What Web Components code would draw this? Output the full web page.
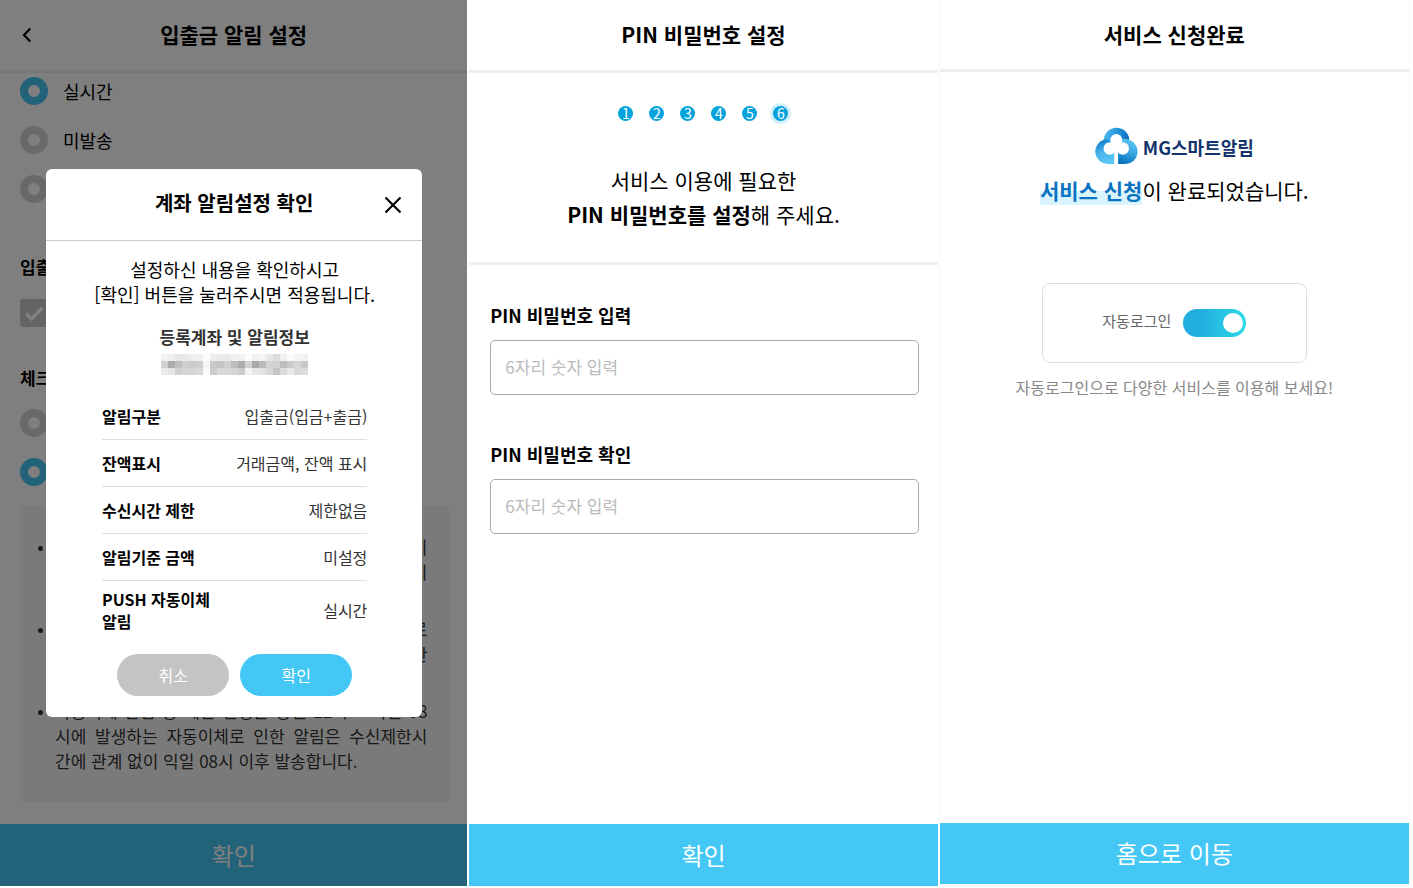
<!DOCTYPE html>
<html lang="ko">
<head>
<meta charset="utf-8">
<meta name="viewport" content="width=device-width, initial-scale=1">
<title>MG스마트알림</title>
<style>
  body {
    margin: 0;
    background: #fff;
    color: #000;
    font-family: "Noto Sans CJK KR", "Noto Sans", sans-serif;
    font-size: 18px;
    line-height: 25px;
    --sky: #45c7f5;
    --line: #eee;
  }
  main {
    display: grid;
    grid-template-columns: 467fr 468fr 469fr;
    align-items: start;
    gap: 2px;
    min-height: 100vh;
    padding-right: 4px;
    box-sizing: border-box;
  }
</style>
</head>
<body>
<main>
  <app-screen heading="입출금 알림 설정" action="확인" back>
    <alarm-settings></alarm-settings>
    <confirm-dialog slot="overlay" heading="계좌 알림설정 확인">
      <alarm-summary></alarm-summary>
    </confirm-dialog>
  </app-screen>

  <app-screen heading="PIN 비밀번호 설정" action="확인">
    <step-intro total="6" current="6">
      서비스 이용에 필요한<br><b>PIN 비밀번호를 설정</b>해 주세요.
    </step-intro>
    <pin-form>
      <pin-field label="PIN 비밀번호 입력" placeholder="6자리 숫자 입력"></pin-field>
      <pin-field label="PIN 비밀번호 확인" placeholder="6자리 숫자 입력"></pin-field>
    </pin-form>
  </app-screen>

  <app-screen heading="서비스 신청완료" action="홈으로 이동" compact>
    <done-panel>
      <auto-login label="자동로그인"></auto-login>
    </done-panel>
  </app-screen>
</main>

<script>
(function () {
  // Attaches an open shadow root filled from a markup string
  function mount(host, html) {
    const template = document.createElement("template");
    template.innerHTML = html;
    host.attachShadow({ mode: "open" }).appendChild(template.content.cloneNode(true));
  }

  class AppScreen extends HTMLElement {
    connectedCallback() {
      const back = this.hasAttribute("back")
        ? `<button class="back" aria-label="이전">
             <svg width="10" height="16" viewBox="0 0 10 16"><path d="M8.2 1.5 2 8l6.2 6.5" fill="none" stroke="#000" stroke-width="2.2"/></svg>
           </button>`
        : "";
      mount(this, `
        <style>
          :host {
            position: relative;
            display: flex;
            flex-direction: column;
            min-width: 0;
            min-height: calc(100vh - 2px);
            background: #fff;
          }
          :host([compact]) {
            min-height: calc(100vh - 4px);
            box-shadow: 0 0 0 1px #f7f7f7;
          }
          header {
            display: grid;
            grid-template-columns: 54px 1fr 54px;
            align-items: center;
            height: 70px;
            border-bottom: 3px solid var(--line);
          }
          :host([compact]) header { height: 69px; }
          h1 {
            grid-column: 2;
            margin: 0;
            padding-bottom: 2px;
            font-size: 21px;
            line-height: 32px;
            font-weight: 700;
            text-align: center;
          }
          .back {
            grid-column: 1;
            grid-row: 1;
            justify-self: center;
            display: flex;
            padding: 0;
            border: 0;
            background: none;
          }
          .content { flex: 1; }
          footer { display: flex; }
          .action {
            flex: 1;
            height: 62px;
            padding: 0 0 2px;
            border: 0;
            background: var(--sky);
            color: #fff;
            font: inherit;
            font-size: 24px;
          }
          :host([compact]) .action { height: 61px; }
        </style>
        <header>${back}<h1>${this.getAttribute("heading")}</h1></header>
        <div class="content"><slot></slot></div>
        <footer><button class="action">${this.getAttribute("action")}</button></footer>
        <slot name="overlay"></slot>
      `);
    }
  }

  class AlarmSettings extends HTMLElement {
    connectedCallback() {
      mount(this, `
        <style>
          :host { display: block; padding: 4px 18px 20px 20px; }
          .group {
            display: grid;
            gap: 21px;
            margin: 0;
            padding: 0;
            border: 0;
          }
          .group label {
            display: flex;
            align-items: center;
            gap: 15px;
            height: 28px;
          }
          h2 {
            margin: 0;
            font-size: 17px;
            line-height: 24px;
          }
          .first { margin-top: 52px; }
          .second { margin-top: 39px; }
          input { appearance: none; margin: 0; flex: none; }
          input[type="radio"] {
            width: 28px;
            height: 28px;
            border: 8px solid #d3d3d3;
            border-radius: 50%;
            background: #fff;
          }
          input[type="radio"]:checked { border-color: var(--sky); }
          .check {
            display: grid;
            width: 28px;
            height: 28px;
            margin-top: 20px;
          }
          .check > * { grid-area: 1 / 1; }
          .check input { border-radius: 3px; background: #c8c8c8; }
          .spaced { margin-top: 19px; }
          ul {
            display: grid;
            gap: 7px;
            margin: 20px 0 0;
            padding: 28px 22px 29px 35px;
            background: #f5f5f5;
            color: #333;
            font-size: 17px;
          }
          li { padding: 0; }
          li::marker { font-size: 13px; }
          li span {
            display: block;
            min-height: 25px;
            text-align-last: justify;
            white-space: nowrap;
          }
          li span.end { text-align-last: right; }
          li span:last-child { text-align-last: left; }
        </style>
        <fieldset class="group">
          <label><input type="radio" name="push" checked>실시간</label>
          <label><input type="radio" name="push">미발송</label>
          <label><input type="radio" name="push" aria-label="수신제한"></label>
        </fieldset>
        <h2 class="first">입출</h2>
        <label class="check">
          <input type="checkbox" aria-label="입출금">
          <svg width="28" height="28" viewBox="0 0 28 28"><path d="M6 14.500l5.500 5.500L22.500 8.500" fill="none" stroke="#fff" stroke-width="3.600"/></svg>
        </label>
        <h2 class="second">체크</h2>
        <fieldset class="group spaced">
          <label><input type="radio" name="card" aria-label="발송"></label>
          <label><input type="radio" name="card" aria-label="미발송" checked></label>
        </fieldset>
        <ul>
          <li><span class="end">기</span><span class="end">이</span><span></span></li>
          <li><span class="end">로</span><span class="end">한</span><span></span></li>
          <li><span>자동이체 알림 중 제한 설정은 당일 22시 ~ 익일 08</span><span>시에 발생하는 자동이체로 인한 알림은 수신제한시</span><span>간에 관계 없이 익일 08시 이후 발송합니다.</span></li>
        </ul>
      `);
    }
  }

  class ConfirmDialog extends HTMLElement {
    connectedCallback() {
      mount(this, `
        <style>
          /* Dimmed layer over the whole screen */
          :host {
            position: absolute;
            inset: 0;
            display: grid;
            align-items: center;
            padding: 0 45px 0 46px;
            background: rgba(0, 0, 0, 0.5);
          }
          section {
            border-radius: 6px;
            background: #fff;
          }
          header {
            display: grid;
            grid-template-columns: 58px 1fr 58px;
            align-items: center;
            height: 71px;
            border-bottom: 1px solid #ccc;
          }
          h2 {
            grid-column: 2;
            margin: 0;
            padding-bottom: 4px;
            font-size: 20px;
            line-height: 30px;
            text-align: center;
          }
          .close {
            justify-self: center;
            display: flex;
            padding: 0;
            border: 0;
            background: none;
          }
          .body { padding: 16px 55px 21px 56px; }
          .buttons {
            display: flex;
            justify-content: center;
            gap: 11px;
            margin-top: 15px;
          }
          .buttons button {
            width: 112px;
            height: 42px;
            padding: 0;
            border: 0;
            border-radius: 21px;
            background: #c4c4c4;
            color: #fff;
            font: inherit;
            font-size: 16px;
          }
          .buttons .ok { background: var(--sky); }
        </style>
        <section role="dialog">
          <header>
            <h2>${this.getAttribute("heading")}</h2>
            <button class="close" aria-label="닫기">
              <svg width="18" height="18" viewBox="0 0 18 18"><path d="M1.500 1.500l15 15M16.500 1.500l-15 15" fill="none" stroke="#000" stroke-width="2.200"/></svg>
            </button>
          </header>
          <div class="body">
            <slot></slot>
            <div class="buttons"><button>취소</button><button class="ok">확인</button></div>
          </div>
        </section>
      `);
    }
  }

  class AlarmSummary extends HTMLElement {
    connectedCallback() {
      const rows = [
        ["알림구분", "입출금(입금+출금)"],
        ["잔액표시", "거래금액, 잔액 표시"],
        ["수신시간 제한", "제한없음"],
        ["알림기준 금액", "미설정"],
        ["PUSH 자동이체<br>알림", "실시간"],
      ];
      mount(this, `
        <style>
          :host { display: block; }
          p {
            margin: 0 -20px;
            text-align: center;
            white-space: nowrap;
          }
          h3 {
            margin: 17px 0 5px;
            color: #333;
            font-size: 17px;
            line-height: 25px;
            text-align: center;
          }
          .masked { display: block; margin: 0 auto 18px; }
          table {
            width: 100%;
            border-collapse: collapse;
            font-size: 16px;
            line-height: 22px;
          }
          th, td {
            height: 46px;
            padding: 0;
            border-bottom: 1px solid #ddd;
            white-space: nowrap;
          }
          th { text-align: left; }
          td { color: #333; text-align: right; }
          tr:last-child > * { height: 58px; border: 0; }
        </style>
        <p>설정하신 내용을 확인하시고<br>[확인] 버튼을 눌러주시면 적용됩니다.</p>
        <h3>등록계좌 및 알림정보</h3>
        <svg class="masked" width="147" height="21" viewBox="0 0 21 3" shape-rendering="crispEdges"></svg>
        <table>${rows.map(([k, v]) => `<tr><th scope="row">${k}</th><td>${v}</td></tr>`).join("")}</table>
      `);
      this.drawMask(this.shadowRoot.querySelector(".masked"));
    }

    // Account number pixelated into grey cells, one hex digit pair per cell
    drawMask(svg) {
      const cells = [
        "f1 f0 e6 e8 ee f0 fc ee eb e9 f0 f2 fb f0 f4 e8 dc f0 fb f3 f1",
        "d0 ab c0 cf cb cd f4 c8 c5 ce bc ad d2 a9 bb d2 d0 bd ca d6 c8",
        "ea e4 d0 d5 d5 d8 fa cc d8 d8 d4 cc f3 e6 e3 d8 c5 dc e8 d9 dd",
      ];
      cells.forEach((row, y) => {
        row.split(" ").forEach((c, x) => {
          const rect = document.createElementNS("http://www.w3.org/2000/svg", "rect");
          rect.setAttribute("x", x);
          rect.setAttribute("y", y);
          rect.setAttribute("width", 1);
          rect.setAttribute("height", 1);
          rect.setAttribute("fill", `#${c}${c}${c}`);
          svg.appendChild(rect);
        });
      });
    }
  }

  class StepIntro extends HTMLElement {
    connectedCallback() {
      const total = Number(this.getAttribute("total"));
      const current = Number(this.getAttribute("current"));
      let steps = "";
      for (let i = 1; i <= total; i++) {
        steps += `<li${i === current ? ' aria-current="step"' : ""}>${i}</li>`;
      }
      mount(this, `
        <style>
          :host {
            display: block;
            padding: 33px 20px 31px;
            border-bottom: 3px solid var(--line);
            text-align: center;
          }
          ol {
            display: flex;
            justify-content: center;
            gap: 16px;
            margin: 0 0 42px;
            padding: 0;
            list-style: none;
          }
          li {
            width: 15px;
            height: 15px;
            border-radius: 50%;
            background: #05a3dc;
            color: #fff;
            font-size: 14px;
            line-height: 15px;
          }
          li[aria-current] { box-shadow: 0 0 0 3px #cff0fb; }
          .message { font-size: 21px; line-height: 34px; }
        </style>
        <ol>${steps}</ol>
        <div class="message"><slot></slot></div>
      `);
    }
  }

  class PinForm extends HTMLElement {
    connectedCallback() {
      mount(this, `
        <style>
          :host { display: block; padding: 37px 19px 40px 21px; }
          form { display: grid; gap: 46px; }
        </style>
        <form><slot></slot></form>
      `);
    }
  }

  class PinField extends HTMLElement {
    connectedCallback() {
      mount(this, `
        <style>
          :host { display: grid; gap: 12px; }
          label { font-size: 18px; line-height: 26px; font-weight: 700; }
          input {
            box-sizing: border-box;
            width: 100%;
            height: 55px;
            padding: 0 14px 2px;
            border: 1px solid #aaa;
            border-radius: 5px;
            font: inherit;
            font-size: 17px;
          }
          input::placeholder { color: #bbb; }
        </style>
        <label for="pin">${this.getAttribute("label")}</label>
        <input id="pin" type="password" inputmode="numeric" maxlength="6" placeholder="${this.getAttribute("placeholder")}">
      `);
    }
  }

  class BrandLogo extends HTMLElement {
    connectedCallback() {
      mount(this, `
        <style>
          :host {
            display: flex;
            align-items: center;
            gap: 5px;
            color: #12336b;
            font-weight: 700;
          }
          span { padding-top: 3px; }
        </style>
        <svg width="43" height="37" viewBox="0 0 43 37" aria-hidden="true">
          <defs>
            <linearGradient id="top" x1="0" x2="1" y1="0.300" y2="0.500">
              <stop offset="0" stop-color="#4cb9ee"/><stop offset="0.450" stop-color="#2a9ade"/><stop offset="1" stop-color="#0868b8"/>
            </linearGradient>
            <linearGradient id="left" x1="0.300" x2="0.600" y1="0" y2="1">
              <stop offset="0" stop-color="#0f79c6"/><stop offset="0.500" stop-color="#49b5eb"/><stop offset="1" stop-color="#5cc8f5"/>
            </linearGradient>
            <linearGradient id="right" x1="0.700" x2="0.300" y1="0" y2="1">
              <stop offset="0" stop-color="#5fc8f4"/><stop offset="0.500" stop-color="#38a4e0"/><stop offset="1" stop-color="#0872bf"/>
            </linearGradient>
          </defs>
          <circle cx="21.500" cy="13.500" r="12.800" fill="url(#top)"/>
          <path d="M9.500 12.600A12.400 12.400 0 0 0 12.500 37H19.700V18L12 12.400Z" fill="url(#left)"/>
          <path d="M26 12.400Q30 11 34 12.800A12.400 12.400 0 0 1 30.500 37H23V18Z" fill="url(#right)"/>
          <g fill="#fff">
            <circle cx="21.300" cy="13" r="6"/>
            <circle cx="14.800" cy="21.500" r="6.200"/>
            <circle cx="27.800" cy="21.500" r="6.200"/>
            <path d="M17 15h8.600v9H17zM19.300 22h3.800v15h-3.800z"/>
          </g>
        </svg>
        <span>MG스마트알림</span>
      `);
    }
  }

  class DonePanel extends HTMLElement {
    connectedCallback() {
      mount(this, `
        <style>
          :host {
            display: flex;
            flex-direction: column;
            align-items: center;
            padding: 55px 20px 40px;
          }
          .message {
            margin: 9px 0 76px;
            font-size: 21px;
            line-height: 34px;
          }
          mark {
            background: linear-gradient(transparent 52%, #d9f4fe 52%);
            color: #0b74c2;
            font-weight: 700;
          }
          .hint {
            margin: 12px 0 0;
            color: #888;
            font-size: 16px;
          }
        </style>
        <brand-logo></brand-logo>
        <p class="message"><mark>서비스 신청</mark>이 완료되었습니다.</p>
        <slot></slot>
        <p class="hint">자동로그인으로 다양한 서비스를 이용해 보세요!</p>
      `);
    }
  }

  class AutoLogin extends HTMLElement {
    connectedCallback() {
      mount(this, `
        <style>
          :host {
            box-sizing: border-box;
            display: flex;
            align-items: center;
            justify-content: center;
            gap: 12px;
            width: 265px;
            height: 80px;
            border: 1px solid #ddd;
            border-radius: 8px;
          }
          label { padding-bottom: 6px; color: #666; font-size: 15px; }
          input {
            appearance: none;
            display: flex;
            justify-content: flex-end;
            align-items: center;
            box-sizing: border-box;
            width: 63px;
            height: 28px;
            margin: 0;
            padding: 0 3px;
            border-radius: 14px;
            background: linear-gradient(90deg, #22afe0 30%, #2edbe6);
          }
          input::before {
            content: "";
            width: 20px;
            height: 20px;
            border-radius: 50%;
            background: #fff;
          }
        </style>
        <label for="auto">${this.getAttribute("label")}</label>
        <input id="auto" type="checkbox" role="switch" checked>
      `);
    }
  }

  customElements.define("app-screen", AppScreen);
  customElements.define("alarm-settings", AlarmSettings);
  customElements.define("confirm-dialog", ConfirmDialog);
  customElements.define("alarm-summary", AlarmSummary);
  customElements.define("step-intro", StepIntro);
  customElements.define("pin-form", PinForm);
  customElements.define("pin-field", PinField);
  customElements.define("brand-logo", BrandLogo);
  customElements.define("done-panel", DonePanel);
  customElements.define("auto-login", AutoLogin);
})();
</script>
</body>
</html>
